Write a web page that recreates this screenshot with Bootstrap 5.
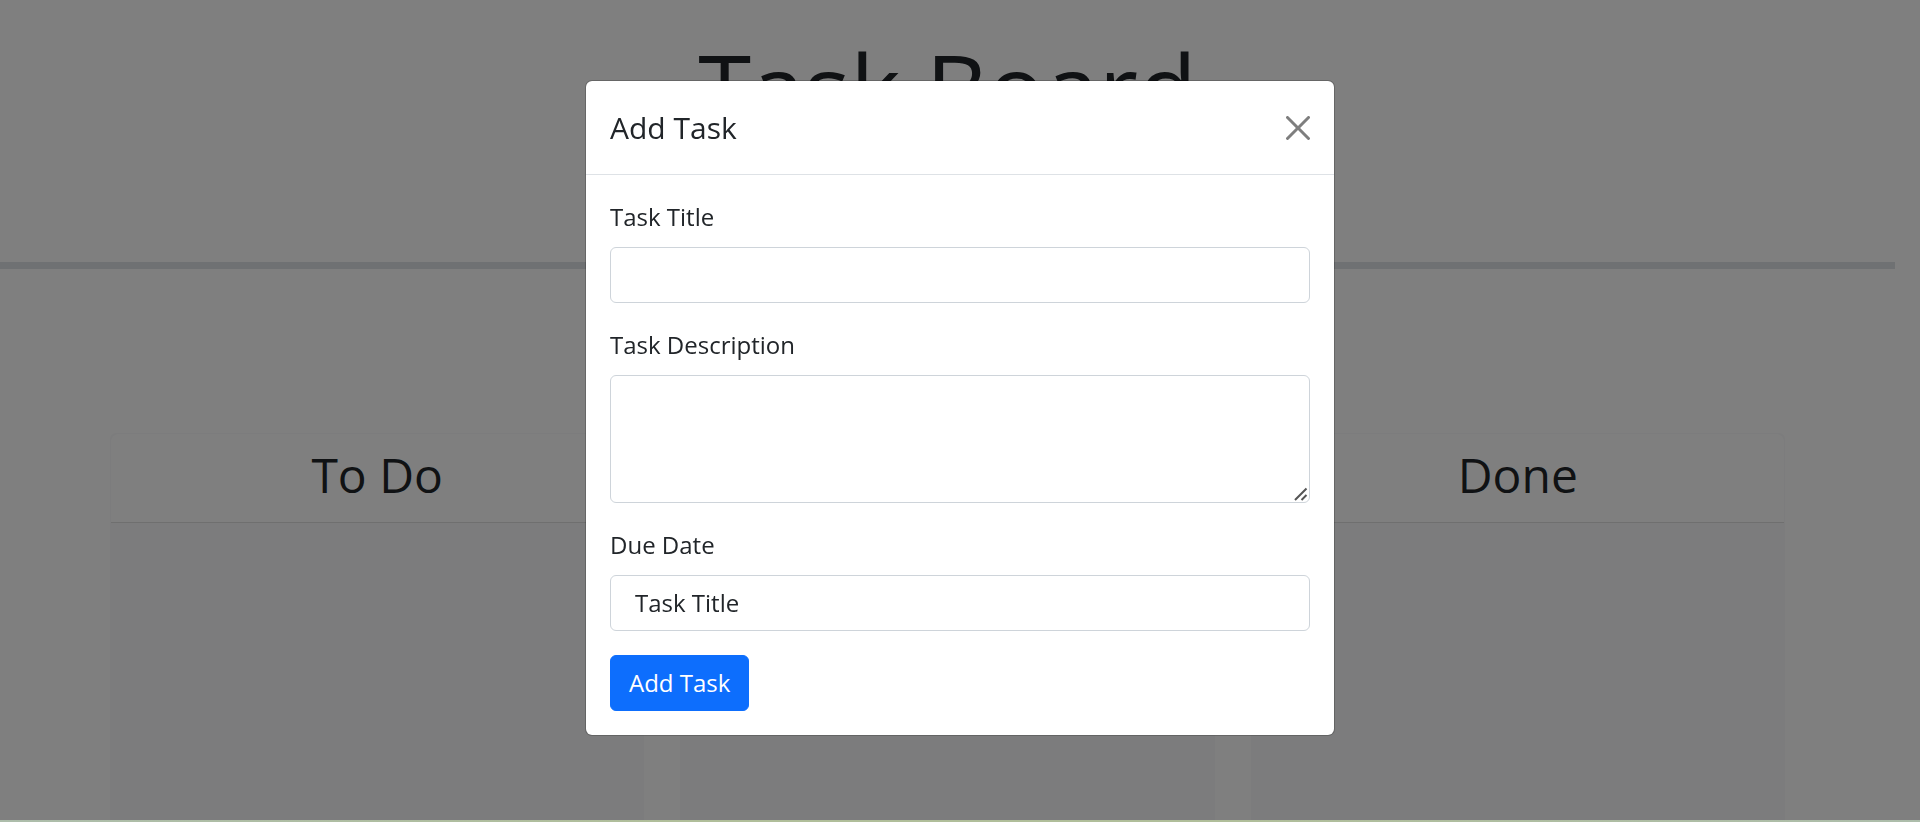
<!DOCTYPE html>
<html lang="en">
<head>
<meta charset="utf-8">
<meta name="viewport" content="width=device-width, initial-scale=1">
<title>Task Board</title>
<link href="https://cdn.jsdelivr.net/npm/bootstrap@5.3.0/dist/css/bootstrap.min.css" rel="stylesheet">
<style>
  html { font-size: 24px; }
  body {
    font-family: "Open Sans", "Noto Sans", sans-serif;
    color: #212529;
    background: #fff;
  }
  .page { padding-right: 25px; }
  .board-header {
    padding: 29px 0 118px;
    border-bottom: 7px solid #dee2e6;
  }
  .board-title { font-size: 96px; line-height: 115px; font-weight: 400; }
  .board-lanes { max-width: 1711px; padding-top: 164px; }
  .lane { border-color: #f8f9fa; border-radius: 6px; border-bottom: 0; }
  .lane-header {
    min-height: 89px;
    padding: 12px 24px 18px;
    background: #fff;
    border-bottom: 1px solid #dfdfdf;
  }
  .lane-title { font-size: 48px; line-height: 58px; font-weight: 400; }
  .task-modal {
    --bs-modal-width: 750px;
    --bs-modal-border-radius: 7px;
    --bs-modal-inner-border-radius: 6px;
    --bs-modal-border-color: rgba(0, 0, 0, .2);
    --bs-modal-header-border-color: #dee2e6;
    --bs-modal-box-shadow: none;
    --bs-modal-color: #212529;
  }
  .task-modal .modal-dialog { margin-top: 80px; }
  .task-modal .modal-title { font-size: 30px; line-height: 45px; font-weight: 400; }
  .task-modal .form-control { border-color: #ced4da; border-radius: 6px; color: #212529; }
  .task-modal .due-date { padding-left: 24px; }
  .task-modal .btn { border-radius: 6px; font-weight: 500; }
  .task-modal textarea::-webkit-resizer { display: none; }
  .resize-grip { right: 2px; bottom: 2px; pointer-events: none; }
  .bottom-strip {
    height: 2px;
    z-index: 2000;
    background: linear-gradient(90deg, #adbdab, #b0be9a 35%, #b0be9a 65%, #adbdab);
  }
</style>
</head>
<body class="overflow-hidden">
<div class="page vh-100 d-flex flex-column">
  <header class="board-header text-center">
    <h1 class="board-title mb-0">Task Board</h1>
  </header>
  <main class="board-lanes container-fluid flex-grow-1 d-flex">
    <div class="row flex-grow-1">
      <section class="col-4 d-flex">
        <div class="lane card bg-light flex-grow-1 rounded-bottom-0">
          <div class="lane-header card-header text-center"><h2 class="lane-title mb-0">To Do</h2></div>
          <div class="card-body"></div>
        </div>
      </section>
      <section class="col-4 d-flex">
        <div class="lane card bg-light flex-grow-1 rounded-bottom-0">
          <div class="lane-header card-header"></div>
          <div class="card-body"></div>
        </div>
      </section>
      <section class="col-4 d-flex">
        <div class="lane card bg-light flex-grow-1 rounded-bottom-0">
          <div class="lane-header card-header text-center"><h2 class="lane-title mb-0">Done</h2></div>
          <div class="card-body"></div>
        </div>
      </section>
    </div>
  </main>
</div>

<div class="modal-backdrop show"></div>
<div class="task-modal modal show d-block" id="taskModal" tabindex="-1" role="dialog" aria-modal="true" aria-labelledby="taskModalLabel">
  <div class="modal-dialog">
    <div class="modal-content">
      <div class="modal-header">
        <h5 class="modal-title" id="taskModalLabel">Add Task</h5>
        <button type="button" class="btn-close" data-bs-dismiss="modal" aria-label="Close"></button>
      </div>
      <div class="modal-body">
        <form>
          <div class="mb-3">
            <label for="taskTitle" class="form-label">Task Title</label>
            <input type="text" class="form-control" id="taskTitle">
          </div>
          <div class="mb-3">
            <label for="taskDescription" class="form-label">Task Description</label>
            <div class="position-relative d-flex">
              <textarea class="form-control" id="taskDescription" rows="3"></textarea>
              <svg class="resize-grip position-absolute" width="14" height="14" viewBox="0 0 14 14" fill="none" stroke="#555" stroke-width="2" aria-hidden="true"><path d="M1 13 12.500 1.500M7.500 13 12.500 8"/></svg>
            </div>
          </div>
          <div class="mb-3">
            <label for="taskDueDate" class="form-label">Due Date</label>
            <input type="text" class="form-control due-date" id="taskDueDate" value="Task Title">
          </div>
          <button type="submit" class="btn btn-primary">Add Task</button>
        </form>
      </div>
    </div>
  </div>
</div>
<div class="bottom-strip fixed-bottom"></div>
<script src="https://cdn.jsdelivr.net/npm/bootstrap@5.3.0/dist/js/bootstrap.bundle.min.js"></script>
</body>
</html>
